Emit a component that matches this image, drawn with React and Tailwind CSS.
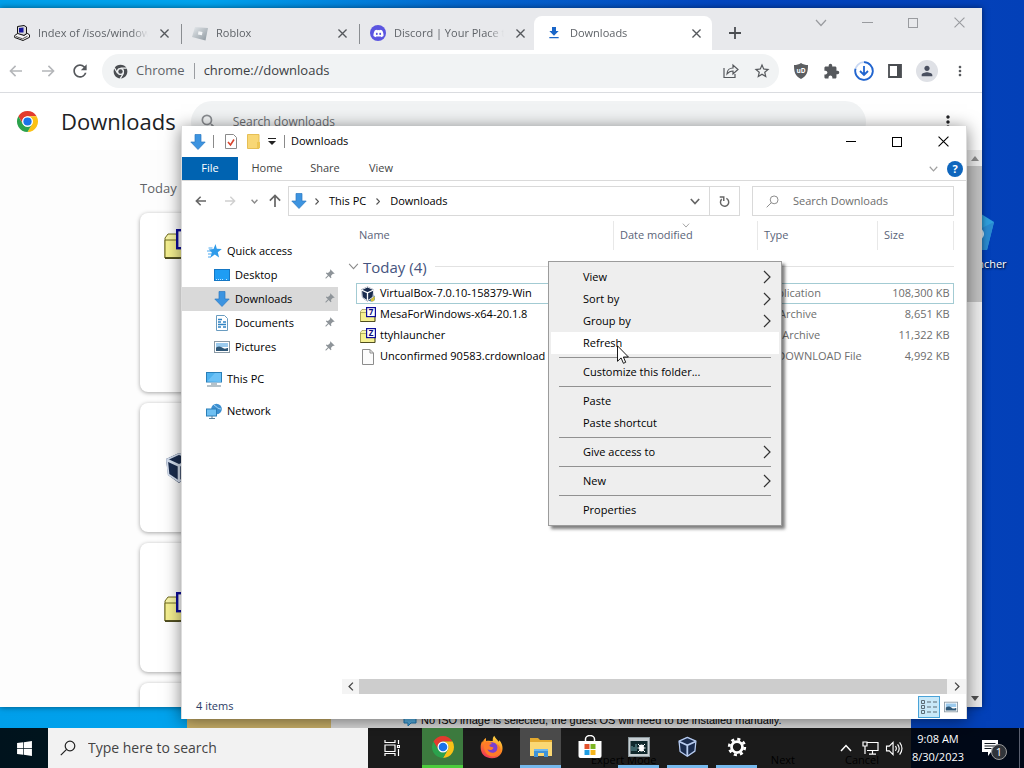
import React, { useState } from "react";
import { FaDiscord, FaWindows } from "react-icons/fa";
import { MdExtension, MdFileDownload, MdMoreVert, MdPerson, MdPushPin, MdRefresh, MdSearch, MdStarBorder } from "react-icons/md";

/* ---------- icons ---------- */

const ChromeLogo = ({ className, mono }) => (
  <svg viewBox="0 0 48 48" className={className}>
    <path d="M4.95 13A22 22 0 0 1 43.05 13L24 13A11 11 0 0 0 14.47 29.5Z" fill={mono ? "#4a4d51" : "#e33b2e"} />
    <path d="M43.05 13A22 22 0 0 1 24 46L33.53 29.5A11 11 0 0 0 24 13Z" fill={mono ? "#4a4d51" : "#fbc116"} />
    <path d="M24 46A22 22 0 0 1 4.95 13L14.47 29.5A11 11 0 0 0 33.53 29.5Z" fill={mono ? "#4a4d51" : "#2ba24c"} />
    {mono && <path d="M24 13H44M14.5 29.5L4 11M33.5 29.5L23 47" stroke="#f1f3f4" strokeWidth="4" />}
    <circle cx="24" cy="24" r="11" fill={mono ? "#f1f3f4" : "#fff"} />
    <circle cx="24" cy="24" r={mono ? 7 : 8.6} fill={mono ? "#4a4d51" : "#1a73e8"} />
  </svg>
);

const DownArrow = ({ className }) => (
  <svg viewBox="0 0 16 16" className={className}>
    <path d="M5 .5h6v7.500h4.200L8 15.500.8 8H5z" fill="#3d94e0" stroke="#2b78c2" strokeWidth=".7" />
  </svg>
);

const Cross = ({ className, width = 1 }) => (
  <svg viewBox="0 0 10 10" className={className} fill="none" stroke="currentColor" strokeWidth={width}>
    <path d="M.5.5l9 9M9.500.5l-9 9" />
  </svg>
);

const Chevron = ({ className, width = 1.2 }) => (
  <svg viewBox="0 0 12 8" className={className} fill="none" stroke="currentColor" strokeWidth={width}>
    <path d="M1 1l5 5.500L11 1" />
  </svg>
);

const ChevronRight = ({ className, width = 1.2 }) => (
  <svg viewBox="0 0 8 14" className={className} fill="none" stroke="currentColor" strokeWidth={width}>
    <path d="M1 1l6 6-6 6" />
  </svg>
);

const Arrow = ({ className, width = 1.8 }) => (
  <svg viewBox="0 0 16 14" className={className} fill="none" stroke="currentColor" strokeWidth={width}>
    <path d="M15 7H2M7.500 1L1.500 7l6 6" />
  </svg>
);

const Lens = ({ className }) => (
  <svg viewBox="0 0 16 16" className={className} fill="none" stroke="currentColor" strokeWidth="1.200">
    <circle cx="10" cy="6" r="4.800" />
    <path d="M6.600 9.400L.8 15.200" />
  </svg>
);

const ServerIcon = () => (
  <svg viewBox="0 0 16 16" className="size-4">
    <path d="M3.500 1.500L10 .5l2.500 1.500v6.500L10 10.500 3.500 9.500z" fill="#d9d9dc" stroke="#111" />
    <path d="M5 3l4.500-.4v5L5 7.600z" fill="#16169c" />
    <path d="M.7 10.500l3-2 6.500 2 3-2.200 2.300 1.500v2.500l-6.500 3.200L.7 12.500z" fill="#f4f4f4" stroke="#111" />
    <path d="M2 11.500l6.500 2.300 5-2.600" fill="none" stroke="#111" strokeWidth=".7" />
  </svg>
);

const RobloxIcon = () => (
  <svg viewBox="0 0 16 16" className="size-4">
    <defs>
      <linearGradient id="rbx" x1="0" y1="0" x2="1" y2="1">
        <stop offset="0" stopColor="#e6eaed" />
        <stop offset="1" stopColor="#8d979f" />
      </linearGradient>
    </defs>
    <path d="M3 2l13 1-2.500 12.500L0 12z" fill="url(#rbx)" />
    <path d="M6.500 6.200l4 .7-.6 3.300-4-.8z" fill="#f4f6f8" />
  </svg>
);

const ArchiveIcon = ({ letter, className }) => (
  <svg viewBox="0 0 16 16" className={className}>
    <path d="M.5 4.500l1.500-2h4l1.500 2V14.500H.5z" fill="#f8f5a8" stroke="#6e6a20" strokeWidth=".5" />
    <path d="M.5 5.500h14.500v9H.5z" fill="#f5f090" stroke="#6e6a20" strokeWidth=".5" />
    <path d="M.5 14.500h14.500V9" fill="none" stroke="#3a3810" strokeWidth=".8" />
    <rect x="6.600" y=".6" width="8.800" height="9" fill="#fff" stroke="#0c0c9a" strokeWidth="1.200" />
    <text x="11" y="8.200" textAnchor="middle" fontSize="8" fontWeight="700" fill="#0c0c7a">{letter}</text>
  </svg>
);

const CubeIcon = ({ className, line = "#fff", badge }) => (
  <svg viewBox="0 0 32 32" className={className}>
    {badge && <circle cx="23" cy="24" r="7" fill="#3f7fa8" />}
    {badge && <path d="M20 18l10 4-2 8-6 1z" fill="#d8c33a" />}
    <path d="M15 1l13 6-1 15-12 9L4 23 2 7z" fill="#1a2c4e" />
    <path d="M3 8l12 5.500L27 8M15 13.500V29" fill="none" stroke={line} strokeWidth="2.600" />
    <path d="M15 2L3 7.500l1.500 15L15 29.500 26 22 27.500 7.500z" fill="none" stroke={line} strokeWidth="1.800" strokeLinejoin="round" />
  </svg>
);

const PageIcon = () => (
  <svg viewBox="0 0 16 16" className="size-4">
    <path d="M2.500.5h7.500l3.500 3.500v11.500h-11z" fill="#fcfcfc" stroke="#8c8c8c" />
    <path d="M10 .5V4h3.500" fill="none" stroke="#8c8c8c" />
  </svg>
);

const StarIcon = () => (
  <svg viewBox="0 0 16 16" className="size-4">
    <path d="M9.500 1l1.300 4.800 5 .3-4 3.200 1.300 5.200-4.300-3-4.500 3.300 1.500-5.300-3-3 4.700-.4z" fill="#2f9bea" />
    <path d="M2.500 5h4M1 8h4.500M2 11h4M2 14h3" stroke="#4ba8ef" strokeWidth="1" />
  </svg>
);

const DesktopIcon = () => (
  <svg viewBox="0 0 16 16" className="size-4">
    <rect x=".5" y="2.500" width="15" height="11" fill="#1e9df4" stroke="#1577c4" />
    <path d="M2 12.500h8M12 12.500h2" stroke="#bfe3ff" strokeDasharray="1 1" />
  </svg>
);

const DocumentIcon = () => (
  <svg viewBox="0 0 16 16" className="size-4">
    <path d="M2.500.5h8l3 3v12h-11z" fill="#fff" stroke="#6a9cc0" />
    <path d="M4 4.500h4M4 7h3M9 7h3M4 9.500h8M4 12h3M9 12h3" stroke="#2f83c4" strokeWidth="1.400" />
  </svg>
);

const PictureIcon = ({ className = "size-4" }) => (
  <svg viewBox="0 0 16 16" className={className}>
    <rect x=".5" y="2.500" width="15" height="11" fill="#fff" stroke="#8b9aa5" />
    <path d="M2 4h12v4H2z" fill="#9ccbee" />
    <path d="M2 8.500c3-2 5-1 7 .5s4 0 5 0V12H2z" fill="#2f5878" />
  </svg>
);

const ComputerIcon = () => (
  <svg viewBox="0 0 16 16" className="size-4">
    <rect x=".5" y="1.500" width="15" height="9.500" fill="#4eb2ef" stroke="#2a7fb8" />
    <path d="M1 10.500L9 2h6v9z" fill="#6cc1f6" />
    <path d="M5 13h6M1 15h14" stroke="#6d8594" />
  </svg>
);

const NetworkIcon = () => (
  <svg viewBox="0 0 16 16" className="size-4">
    <circle cx="10.500" cy="6" r="5.300" fill="#3c8fd0" />
    <path d="M8 2c3 2 4 4 7 4" stroke="#a8d8f8" fill="none" />
    <rect x=".5" y="6" width="10" height="7" fill="#6fc0f2" stroke="#2a7fb8" />
    <path d="M3 15.500h6M6 13V15.500" stroke="#5a7f98" />
  </svg>
);

const FirefoxIcon = () => (
  <svg viewBox="0 0 32 32" className="size-6">
    <defs>
      <linearGradient id="ffx" x1=".8" y1="0" x2=".3" y2="1">
        <stop offset="0" stopColor="#ffe14a" />
        <stop offset=".5" stopColor="#ff8a1e" />
        <stop offset="1" stopColor="#f0325c" />
      </linearGradient>
    </defs>
    <path d="M19 1c1 3 4 5 6 8l1-2c5 6 5 13 2 18-5 8-18 8-24 1C0 21 0 13 3 8l1 2c0-3 2-5 4-6v4c4-1 7 0 9 0 0-3 0-5 2-7z" fill="url(#ffx)" />
    <circle cx="16" cy="17" r="7.500" fill="#7b3fd0" />
    <path d="M7 9c4-1 7 1 9 3-3 0-4 2-3 3s4 1 5 2c-1 3-5 4-8 2 1 4 6 6 10 4s5-7 2-11c5 2 7 8 4 12-4 6-14 6-18 0-3-5-4-11-1-15z" fill="#ff7b2a" />
  </svg>
);

const ExplorerIcon = () => (
  <svg viewBox="0 0 24 22" className="h-[22px] w-6">
    <path d="M1 2h8l2 2h12v16H1z" fill="#e3a92e" />
    <path d="M1 6h22v14H1z" fill="#fbd873" />
    <path d="M5 21v-8h14v8h-4v-4H9v4z" fill="#3f93d8" />
    <path d="M5 13h14v2H5z" fill="#6fb8ee" />
  </svg>
);

const StoreIcon = () => (
  <svg viewBox="0 0 24 24" className="size-6">
    <path d="M7.500 7V4a4.500 3.500 0 0 1 9 0v3" fill="none" stroke="#fff" strokeWidth="1.500" />
    <path d="M.5 6h23v15a2 2 0 0 1-2 2h-19a2 2 0 0 1-2-2z" fill="#fff" />
    <path d="M6.500 9h5v5h-5z" fill="#e2502a" />
    <path d="M12.500 9h5v5h-5z" fill="#7cb524" />
    <path d="M6.500 15h5v5h-5z" fill="#1f9de2" />
    <path d="M12.500 15h5v5h-5z" fill="#f6b51c" />
  </svg>
);

const ProcmonIcon = () => (
  <svg viewBox="0 0 22 20" className="h-5 w-[22px]">
    <rect x=".5" y=".5" width="21" height="19" fill="#c6ced2" stroke="#8b979c" />
    <rect x="2.500" y="4" width="17" height="13" fill="#10282c" />
    <path d="M4 14V9M6 14v-4M8 14V7" stroke="#6fa3a8" />
    <ellipse cx="13.500" cy="11" rx="2.500" ry="3.500" fill="#fff" />
    <path d="M10 7l2 2M17 7l-2 2M9.500 11h8M10 15l2-2M17 15l-2-2" stroke="#fff" />
  </svg>
);

const GearIcon = () => (
  <svg viewBox="0 0 24 24" className="size-[22px]" fill="none" stroke="#fff">
    <circle cx="12" cy="12" r="6" strokeWidth="3" />
    <circle cx="12" cy="12" r="8.500" strokeWidth="3" strokeDasharray="3.340 3.340" />
  </svg>
);

/* ---------- browser window ---------- */

const tabs = [
  { title: "Index of /isos/windows", icon: <ServerIcon />, divider: true },
  { title: "Roblox", icon: <RobloxIcon />, divider: true },
  {
    title: "Discord | Your Place to",
    icon: (
      <span className="flex size-4 items-center justify-center rounded-full bg-[#5b55e0] text-white">
        <FaDiscord className="size-[11px]" />
      </span>
    ),
  },
  { title: "Downloads", icon: <MdFileDownload className="size-5 text-[#1a66c8]" />, active: true },
];

const BrowserTab = ({ tab }) => (
  <div
    className={
      tab.active
        ? "flex h-[34px] w-[178px] items-center rounded-t-lg bg-white pr-[11px] pl-3"
        : "relative flex h-[34px] w-[178px] items-center pr-[9px] pl-[14px]"
    }
  >
    <button className="flex min-w-0 flex-1 items-center gap-2 text-left text-[#5f6368]">
      <span className="flex w-4 shrink-0 justify-center">{tab.icon}</span>
      <span className="min-w-0 flex-1 overflow-hidden mask-r-from-85% whitespace-nowrap">{tab.title}</span>
    </button>
    <button aria-label="Close tab" className="ml-3 text-[#55585c]">
      <Cross className="size-[9px]" width={1.5} />
    </button>
    {tab.divider && <span className="absolute top-2 -right-1 h-5 w-px bg-[#8a8d91]" />}
  </div>
);

const BrowserWindow = () => (
  <section className="absolute top-2 right-[42px] bottom-[61px] left-0 flex flex-col overflow-hidden bg-white shadow-[0_0_6px_rgba(0,0,0,0.5)]">
    <header className="flex h-[42px] shrink-0 items-end bg-[#e8e9ec]">
      <div className="flex items-end">
        {tabs.map((tab) => (
          <BrowserTab key={tab.title} tab={tab} />
        ))}
      </div>
      <button aria-label="New tab" className="ml-[17px] flex h-[34px] items-center text-[#4a4d51]">
        <svg viewBox="0 0 12 12" className="size-3" stroke="currentColor" strokeWidth="1.800"><path d="M6 0v12M0 6h12" /></svg>
      </button>
      <div className="mb-[22px] ml-auto flex items-center text-[#999b9f]">
        <button aria-label="Search tabs" className="flex w-[46px] justify-center"><Chevron className="h-2 w-3" /></button>
        <button aria-label="Minimize" className="flex w-[46px] justify-center"><span className="h-px w-[11px] bg-current" /></button>
        <button aria-label="Maximize" className="flex w-[46px] justify-center"><span className="size-[10px] border border-current" /></button>
        <button aria-label="Close" className="flex w-[46px] justify-center"><Cross className="size-[11px]" /></button>
      </div>
    </header>

    <div className="flex h-[43px] shrink-0 items-center border-b border-[#dadce0] pr-[14px] pl-2 text-[#55585c]">
      <button aria-label="Back" className="text-[#b4b6b9]"><Arrow className="h-3 w-4" /></button>
      <button aria-label="Forward" className="ml-4 text-[#b4b6b9]"><Arrow className="h-3 w-4 rotate-180" /></button>
      <button aria-label="Reload" className="ml-[14px]"><MdRefresh className="size-5" /></button>
      <div className="ml-3 flex h-[34px] min-w-0 flex-1 items-center rounded-full bg-[#f1f3f4] pr-2 pl-[11px] text-[13px]">
        <ChromeLogo mono className="size-[15px]" />
        <span className="ml-2 text-[#5f6368]">Chrome</span>
        <span className="mx-[9px] h-4 w-px bg-[#9a9da1]" />
        <input aria-label="Address" defaultValue="chrome://downloads" className="min-w-0 flex-1 bg-transparent text-[#3c4043] outline-none" />
        <button aria-label="Share">
          <svg viewBox="0 0 16 16" className="size-4" fill="none" stroke="currentColor" strokeWidth="1.200">
            <path d="M1 5v9.500h11V11M4 11c0-4 3-6 6-6V2l5 4.500L10 11V8c-2 0-4 .5-6 3z" />
          </svg>
        </button>
        <button aria-label="Bookmark" className="ml-[14px]"><MdStarBorder className="size-[18px]" /></button>
      </div>
      <div className="ml-[14px] flex items-center gap-[14px]">
        <button aria-label="Ad blocker">
          <svg viewBox="0 0 16 16" className="size-4">
            <path d="M8 0c2 1.500 4.500 2 7 2 0 7-1 11-7 14C2 13 1 9 1 2c2.500 0 5-.5 7-2z" fill="#5c5e61" />
            <text x="8" y="9.500" textAnchor="middle" fontSize="6.500" fontWeight="700" fill="#fff">uD</text>
          </svg>
        </button>
        <button aria-label="Extensions"><MdExtension className="size-[17px]" /></button>
        <button aria-label="Downloads">
          <svg viewBox="0 0 20 20" className="size-5" fill="none" stroke="#2165cf" strokeWidth="1.800">
            <circle cx="10" cy="10" r="8.800" stroke="#c9d8f3" />
            <path d="M10 1.200a8.800 8.800 0 1 1-8.500 6.500M10 5v9M6 10l4 4 4-4" />
          </svg>
        </button>
        <button aria-label="Side panel">
          <svg viewBox="0 0 14 14" className="size-[14px]"><path d="M1 1h12v12H1z" fill="none" stroke="#4a4d51" strokeWidth="1.800" /><path d="M9 1h4v12H9z" fill="#4a4d51" /></svg>
        </button>
        <button aria-label="Profile" className="flex size-[22px] items-center justify-center rounded-full bg-[#dfe1e6] text-[#4a5060]"><MdPerson className="size-4" /></button>
        <button aria-label="Menu"><MdMoreVert className="size-4" /></button>
      </div>
    </div>

    <div className="flex min-h-0 flex-1 flex-col bg-[#fdfdfd]">
      <div className="flex h-[57px] shrink-0 items-center bg-white pr-6 pl-4">
        <ChromeLogo className="size-[23px]" />
        <h1 className="ml-[22px] text-[22px] font-medium text-[#202124]">Downloads</h1>
        <label className="ml-[15px] flex h-[42px] min-w-0 flex-1 items-center rounded-full bg-[#f1f3f4] px-2 text-[#8a8d91]">
          <MdSearch className="size-5" />
          <input aria-label="Search downloads" placeholder="Search downloads" className="ml-[14px] min-w-0 flex-1 text-xs outline-none placeholder:text-[#6a6d71]" />
        </label>
        <button aria-label="More actions" className="ml-[72px] text-[#202124]"><MdMoreVert className="size-5" /></button>
      </div>
      <div className="flex min-h-0 flex-1">
        <main className="min-w-0 flex-1 overflow-hidden px-[140px] pt-7">
          <h2 className="text-[13px] leading-5 text-[#5f6368]">Today</h2>
          <div className="mt-[15px] flex flex-col gap-[11px]">
            <article className="h-[179px] rounded-lg bg-white pt-4 pl-6 shadow-[0_1px_4px_rgba(0,0,0,0.35)]">
              <ArchiveIcon letter="Z" className="size-8" />
            </article>
            <article className="flex h-[129px] items-center rounded-lg bg-white pl-6 shadow-[0_1px_4px_rgba(0,0,0,0.35)]">
              <CubeIcon className="size-8" line="#d4deee" />
            </article>
            <article className="flex h-[129px] items-center rounded-lg bg-white pl-6 shadow-[0_1px_4px_rgba(0,0,0,0.35)]">
              <ArchiveIcon letter="7" className="size-8" />
            </article>
            <article className="h-[129px] rounded-lg bg-white shadow-[0_1px_4px_rgba(0,0,0,0.35)]" />
          </div>
        </main>
        <div className="flex w-[15px] flex-col items-center bg-[#ececec]">
          <span className="flex h-4 items-center"><svg viewBox="0 0 8 5" className="h-[5px] w-2" fill="#8a8a8a"><path d="M0 5h8L4 0z" /></svg></span>
          <span className="h-[136px] w-full bg-[#c1c1c1]" />
          <span className="mt-auto flex h-[18px] items-center"><svg viewBox="0 0 8 5" className="h-[5px] w-2" fill="#505050"><path d="M0 0h8L4 5z" /></svg></span>
        </div>
      </div>
    </div>
  </section>
);

/* ---------- explorer window ---------- */

const places = [
  { name: "Desktop", icon: <DesktopIcon /> },
  { name: "Downloads", icon: <DownArrow className="size-4" /> },
  { name: "Documents", icon: <DocumentIcon /> },
  { name: "Pictures", icon: <PictureIcon /> },
];

const files = [
  { name: "VirtualBox-7.0.10-158379-Win", type: "Application", size: "108,300 KB", icon: <CubeIcon badge className="size-4" /> },
  { name: "MesaForWindows-x64-20.1.8", type: "7Z Archive", size: "8,651 KB", icon: <ArchiveIcon letter="7" className="size-4" /> },
  { name: "ttyhlauncher", type: "ZIP Archive", size: "11,322 KB", icon: <ArchiveIcon letter="Z" className="size-4" /> },
  { name: "Unconfirmed 90583.crdownload", type: "CRDOWNLOAD File", size: "4,992 KB", icon: <PageIcon /> },
];

const ExplorerWindow = () => {
  const [place, setPlace] = useState("Downloads");

  return (
    <section className="absolute top-[126px] right-[57px] bottom-[49px] left-[181px] flex flex-col border-x border-[#dcdcdc] bg-white shadow-[0_2px_16px_rgba(0,0,0,0.5)]">
      <header className="flex h-[31px] shrink-0 items-center pl-2">
        <DownArrow className="size-4" />
        <span className="ml-[7px] h-[13px] w-px bg-[#8a8a8a]" />
        <svg viewBox="0 0 12 15" className="ml-[11px] h-[15px] w-3"><path d="M.5.5h8l3 3v11H.5z" fill="#fff" stroke="#8a8a8a" /><path d="M3 8l2.500 3L9 5.500" fill="none" stroke="#d8432c" strokeWidth="1.600" /></svg>
        <svg viewBox="0 0 13 15" className="ml-[10px] h-[15px] w-[13px]"><path d="M.5.500h11.500v14H.5z" fill="#f8d775" stroke="#e6bf55" /><path d="M10 8h3v6h-3z" fill="#edc654" /></svg>
        <svg viewBox="0 0 8 7" className="ml-2 h-[7px] w-2"><path d="M0 .5h8" stroke="#222" /><path d="M0 3h8L4 7z" fill="#222" /></svg>
        <span className="ml-2 h-[13px] w-px bg-[#8a8a8a]" />
        <span className="ml-[6px]">Downloads</span>
        <div className="ml-auto flex items-center">
          <button aria-label="Minimize" className="flex w-[46px] justify-center"><span className="h-px w-[10px] bg-black" /></button>
          <button aria-label="Maximize" className="flex w-[46px] justify-center"><span className="size-[10px] border border-black" /></button>
          <button aria-label="Close" className="flex w-[46px] justify-center"><Cross className="size-[11px]" /></button>
        </div>
      </header>

      <nav className="flex h-6 shrink-0 items-center border-b border-[#dadada] text-[#444]">
        <button className="h-full w-14 bg-[#0063b1] text-white">File</button>
        <button className="w-[58px]">Home</button>
        <button className="w-[58px]">Share</button>
        <button className="w-[54px]">View</button>
        <button aria-label="Expand ribbon" className="ml-auto text-[#a0a0a0]"><Chevron className="h-[6px] w-[9px]" width={1.6} /></button>
        <button aria-label="Help" className="mr-[3px] ml-[9px] size-4 rounded-full bg-[#0f66bd] font-bold leading-4 text-white">?</button>
      </nav>

      <div className="flex h-10 shrink-0 items-center pr-3 pl-[13px] text-[#666]">
        <button aria-label="Back"><Arrow className="h-[10px] w-3" width={2.2} /></button>
        <button aria-label="Forward" className="ml-[17px] text-[#d0d0d0]"><Arrow className="h-[10px] w-3 rotate-180" width={2} /></button>
        <button aria-label="Recent" className="ml-[15px] text-[#8a8a8a]"><Chevron className="h-[5px] w-[7px]" width={2.4} /></button>
        <button aria-label="Up" className="ml-[10px]"><Arrow className="h-3 w-[14px] rotate-90" width={2} /></button>
        <div className="ml-[6px] flex h-[30px] min-w-0 flex-1 items-center border border-[#d9d9d9] text-black">
          <DownArrow className="ml-[2px] size-4" />
          <ChevronRight className="ml-2 h-[7px] w-1 text-[#555]" width={2.4} />
          <button className="ml-[10px]">This PC</button>
          <ChevronRight className="ml-[10px] h-[7px] w-1 text-[#555]" width={2.4} />
          <button className="ml-[10px]">Downloads</button>
          <button aria-label="Previous locations" className="mr-[9px] ml-auto text-[#666]"><Chevron className="h-[7px] w-[10px]" width={2} /></button>
          <button aria-label="Refresh" className="flex h-full w-[30px] items-center justify-center border-l border-[#d9d9d9] text-[#666]">
            <svg viewBox="0 0 12 14" className="h-[13px] w-[11px]" fill="none" stroke="currentColor" strokeWidth="1.600"><path d="M8 3.600A4.500 4.500 0 1 1 3 4.400M.8 2.200h4.400v4.300" /></svg>
          </button>
        </div>
        <label className="ml-3 flex h-[30px] w-[202px] items-center border border-[#d9d9d9] px-[13px]">
          <Lens className="size-[13px] text-[#8a8a8a]" />
          <input aria-label="Search Downloads" placeholder="Search Downloads" className="ml-[14px] min-w-0 flex-1 outline-none placeholder:text-[#6d6d6d]" />
        </label>
      </div>

      <div className="flex min-h-0 flex-1">
        <aside className="w-[156px] shrink-0 pt-[18px] text-black">
          <button className="flex h-6 w-full items-center gap-[5px] pl-6"><StarIcon />Quick access</button>
          {places.map((p) => (
            <button
              key={p.name}
              onClick={() => setPlace(p.name)}
              className={`flex h-6 w-full items-center gap-[5px] pr-[3px] pl-8 ${place === p.name ? "bg-[#d9d9d9]" : ""}`}
            >
              {p.icon}
              {p.name}
              <MdPushPin className="ml-auto size-3 rotate-45 text-[#8e9499]" />
            </button>
          ))}
          <button className="mt-2 flex h-6 w-full items-center gap-[5px] pl-6"><ComputerIcon />This PC</button>
          <button className="mt-2 flex h-6 w-full items-center gap-[5px] pl-6"><NetworkIcon />Network</button>
        </aside>

        <div className="ml-1 flex min-w-0 flex-1 flex-col">
          <div className="min-h-0 flex-1 pr-3 pl-[14px]">
            <table className="w-full table-fixed text-left text-[#6d6d6d]">
              <colgroup>
                <col />
                <col className="w-[144px]" />
                <col className="w-[120px]" />
                <col className="w-[76px]" />
              </colgroup>
              <thead>
                <tr className="h-[29px] text-[#5a6478]">
                  <th className="border-r border-[#e8e8e8] pl-[3px] font-normal">Name</th>
                  <th className="relative border-r border-[#e8e8e8] pl-[6px] font-normal">
                    Date modified
                    <Chevron className="absolute top-[2px] left-[68px] h-[5px] w-2 text-[#8a8a8a]" />
                  </th>
                  <th className="border-r border-[#e8e8e8] pl-[6px] font-normal">Type</th>
                  <th className="border-r border-[#e8e8e8] pl-[6px] font-normal">Size</th>
                </tr>
              </thead>
              <tbody>
                <tr className="h-[33px]">
                  <th colSpan={4} className="font-normal">
                    <div className="-ml-2 flex items-center text-[15px] leading-5 text-[#46547e]">
                      <Chevron className="h-[7px] w-[11px] text-[#8a8a8a]" />
                      <span className="ml-1">Today (4)</span>
                      <span className="ml-2 h-px flex-1 bg-[#e2e2e2]" />
                    </div>
                  </th>
                </tr>
                {files.map((file, i) => (
                  <tr key={file.name} className={`h-[21px] ${i === 0 ? "outline -outline-offset-1 outline-[#a3cbd3]" : ""}`}>
                    <td className="pl-1 whitespace-nowrap text-black">
                      <span className="flex items-center gap-1">{file.icon}{file.name}</span>
                    </td>
                    <td />
                    <td className="pl-[6px] whitespace-nowrap">{file.type}</td>
                    <td className="pr-1 text-right whitespace-nowrap">{file.size}</td>
                  </tr>
                ))}
              </tbody>
            </table>
          </div>
          <div className="flex h-[15px] shrink-0 items-center bg-[#f4f4f4] text-[#444]">
            <span className="flex w-[17px] justify-center"><ChevronRight className="h-[9px] w-[6px] rotate-180" width={2} /></span>
            <span className="h-full flex-1 bg-[#cdcdcd]" />
            <span className="flex w-[19px] justify-center"><ChevronRight className="h-[9px] w-[6px]" width={2} /></span>
          </div>
        </div>
      </div>

      <footer className="flex h-[25px] shrink-0 items-center pr-2 pl-[14px] text-[#2c3c66]">
        <span>4 items</span>
        <button aria-label="Details view" className="ml-auto flex h-[22px] w-[22px] items-center justify-center border border-[#4aa3d8] bg-[#c8e8f8]">
          <svg viewBox="0 0 16 14" className="h-[14px] w-4" fill="none" stroke="#5b6b75"><path d="M.5.5h3v3h-3zM.5 5.500h3v3h-3zM.5 10.500h3v3h-3zM6 2h4M12 2h4M6 7h4M12 7h4M6 12h4M12 12h4" /></svg>
        </button>
        <button aria-label="Thumbnail view" className="ml-1"><PictureIcon className="size-[14px]" /></button>
      </footer>
    </section>
  );
};

/* ---------- context menu ---------- */

const menuGroups = [
  [{ label: "View", sub: true }, { label: "Sort by", sub: true }, { label: "Group by", sub: true }, { label: "Refresh", hover: true }],
  [{ label: "Customize this folder..." }],
  [{ label: "Paste" }, { label: "Paste shortcut" }],
  [{ label: "Give access to", sub: true }],
  [{ label: "New", sub: true }],
  [{ label: "Properties" }],
];

const ContextMenu = () => (
  <div role="menu" className="absolute top-[261px] left-[548px] w-[234px] border border-[#9b9b9b] bg-[#eeeeee] px-[2px] py-1 text-black shadow-[3px_3px_3px_rgba(0,0,0,0.5)]">
    {menuGroups.map((group, i) => (
      <div key={group[0].label}>
        {i > 0 && <hr className="mx-2 my-[3px] border-[#919191]" />}
        {group.map((item) => (
          <button
            key={item.label}
            role="menuitem"
            className={`flex h-[22px] w-full items-center justify-between pr-2 pl-8 hover:bg-white ${item.hover ? "bg-white" : ""}`}
          >
            {item.label}
            {item.sub && <ChevronRight className="h-[14px] w-2 text-[#333]" />}
          </button>
        ))}
      </div>
    ))}
  </div>
);

/* ---------- taskbar ---------- */

const apps = [
  { name: "Chrome", icon: <ChromeLogo className="size-6" />, box: "bg-[#3c7a3e]", line: "bg-[#4ccc3c]" },
  { name: "Firefox", icon: <FirefoxIcon /> },
  { name: "File Explorer", icon: <ExplorerIcon />, box: "bg-[#4a4a4a]", line: "bg-[#76b9ed]" },
  { name: "Microsoft Store", icon: <StoreIcon /> },
  { name: "Process Monitor", icon: <ProcmonIcon />, line: "bg-[#76b9ed]" },
  { name: "VirtualBox", icon: <CubeIcon className="size-[22px]" line="#b9cdf0" />, line: "bg-[#76b9ed]" },
  { name: "Settings", icon: <GearIcon />, line: "bg-[#76b9ed]" },
];

const Taskbar = () => (
  <footer className="absolute inset-x-0 bottom-0 flex h-10 items-stretch bg-black/88 text-white">
    <button aria-label="Start" className="flex w-12 items-center justify-center"><FaWindows className="size-[17px]" /></button>
    <label className="flex w-80 items-center bg-[#f2f2f2] pl-3 text-[#222]">
      <Lens className="size-4" />
      <input aria-label="Type here to search" placeholder="Type here to search" className="ml-3 min-w-0 flex-1 text-sm outline-none placeholder:text-[#444]" />
    </label>
    <button aria-label="Task view" className="flex w-12 items-center justify-center">
      <svg viewBox="0 0 16 16" className="size-4" fill="none" stroke="#fff" strokeWidth="1.200"><path d="M1 0v2.500h10V0M1 5h10v6.500H1zM1 16v-2.500h10V16M14.500 0v4M14.500 9v7M13.500 5.500h2v2h-2z" /></svg>
    </button>
    <div className="ml-[2px] flex">
      {apps.map((app) => (
        <button key={app.name} aria-label={app.name} className="flex w-[49px] flex-col px-1">
          <span className={`flex w-full flex-1 items-center justify-center ${app.box || ""}`}>{app.icon}</span>
          <span className={`h-[3px] w-full ${app.line || ""}`} />
        </button>
      ))}
    </div>
    <div className="ml-auto flex items-center">
      <button aria-label="Show hidden icons"><Chevron className="h-2 w-3 rotate-180" width={1.5} /></button>
      <svg viewBox="0 0 17 14" className="ml-[10px] h-[14px] w-[17px]" fill="none" stroke="#fff" strokeWidth="1.200"><path d="M5 1.500h11v8H5M1 1h4v4H1zM3 5v8M10.500 9.500V13M7 13.200h7" /></svg>
      <svg viewBox="0 0 18 16" className="ml-[6px] h-[15px] w-[18px]" fill="none" stroke="#fff" strokeWidth="1.200"><path d="M1 5.500h3l4-4v13l-4-4H1zM10.500 5.500q2 2.500 0 5M12.800 3.500q3.500 4.500 0 9M15 1.500q5 6.500 0 13" /></svg>
      <div className="ml-2 w-[54px] text-center leading-[18px]">
        <div>9:08 AM</div>
        <div>8/30/2023</div>
      </div>
      <button aria-label="Notifications" className="relative ml-[17px] h-6 w-[25px]">
        <svg viewBox="0 0 16 16" className="size-4"><path d="M0 0h16v12H9l-3 4v-4H0z" fill="#fff" /><path d="M2.500 3.500h11M2.500 6h11M2.500 8.500h7" stroke="#101820" /></svg>
        <span className="absolute right-0 bottom-0 size-4 rounded-full border border-[#9a9a9a] bg-[#30343a] text-center leading-[14px]">1</span>
      </button>
      <span className="mr-1 ml-3 h-10 w-px bg-[#5a6070]" />
    </div>
  </footer>
);

const App = () => (
  <div className="relative h-screen overflow-hidden bg-[linear-gradient(to_right,#009fea_0%,#00a4ee_20%,#0467cf_45%,#0346bf_70%,#0340b8_100%)] font-['Open_Sans',sans-serif] text-[11px] text-black">
    <a href="#ttyhlauncher" className="absolute top-[212px] right-4 flex w-[68px] flex-col items-center gap-1 leading-4 text-white [text-shadow:1px_1px_2px_#000]">
      <svg viewBox="0 0 40 40" className="size-10">
        <path d="M4 6L24 0l16 10-7 28H6z" fill="#2f9fdc" />
        <path d="M20 20l20-10-7 28H12z" fill="#2b8bd0" />
        <circle cx="24" cy="22" r="6" fill="#d9effb" />
      </svg>
      ttyhlauncher
    </a>

    <section className="absolute right-[113px] bottom-0 left-[187px] flex h-[60px] bg-[#dcdcdc]">
      <div className="w-36 bg-[#cdb36a]" />
      <div className="flex flex-1 flex-col justify-between">
        <p className="flex h-6 items-center gap-1 pl-[72px] font-['Liberation_Sans',sans-serif] whitespace-nowrap">
          <svg viewBox="0 0 14 14" className="size-[14px]"><path d="M1 3h12v7H8l-3 3v-3H1z" fill="#59b4e8" stroke="#1c78b4" /></svg>
          No ISO image is selected, the guest OS will need to be installed manually.
        </p>
        <div className="flex h-4 items-center pr-8 pl-[260px]">
          <button>Expert Mode</button>
          <button className="ml-auto">Next</button>
          <button className="ml-[50px]">Cancel</button>
        </div>
      </div>
    </section>

    <BrowserWindow />
    <ExplorerWindow />
    <ContextMenu />
    <Taskbar />

    <svg viewBox="0 0 12 19" className="pointer-events-none absolute top-[345px] left-[617px] h-[19px] w-3">
      <path d="M.5.800v15.500l3.600-3.400 2.300 5.400 2.300-1-2.300-5.300h5z" fill="#fff" stroke="#000" strokeWidth=".9" />
    </svg>
  </div>
);

export default App;
